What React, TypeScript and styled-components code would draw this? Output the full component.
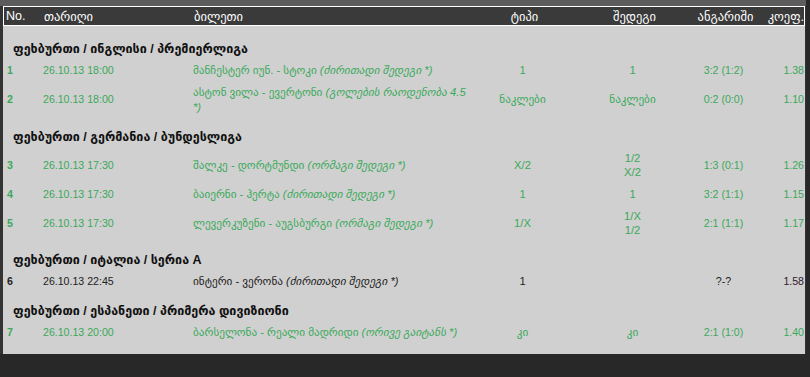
import styled, { createGlobalStyle } from 'styled-components'

const GlobalStyle = createGlobalStyle`
  body {
    margin: 0;
    background: #282828;
    font-family: 'Liberation Sans', Arial, 'DejaVu Sans', sans-serif;
  }
`

const SPage = styled.div`
  width: 803px;
  border-top: 6px solid #5c5c5c;
  padding-left: 3px;
  background: #333;
`

const STable = styled.div`
  width: 802px;
`

const SHead = styled.div`
  display: grid;
  grid-template-columns: 37px 150px 282px 100px 120px 62px 1fr;
  align-items: center;
  height: 18px;
  background: #3a3a3a;
  border: 1px solid #fff;
  color: #fff;
  font-size: 12.5px;
`

const SHeadCell = styled.div<{ $align?: string }>`
  text-align: ${(p) => p.$align || 'left'};
  padding: 0 0 0 3px;
  white-space: nowrap;
`

const SNo = styled.span`
  font-size: 12.5px;
  margin-left: -1px;
`

const SBody = styled.div`
  background: #d0d0d0;
  padding: 4px 0 11px;
`

const SGroupTitle = styled.div`
  padding: 11px 0 2px 10px;
  line-height: 16px;
  font-size: 12.5px;
  font-weight: bold;
  color: #111;
`

const SRow = styled.div<{ $dark?: boolean }>`
  display: grid;
  grid-template-columns: 37px 150px 282px 100px 120px 62px 1fr;
  align-items: center;
  padding: 3.5px 0;
  line-height: 15px;
  font-size: 10.6px;
  color: ${(p) => (p.$dark ? '#222' : '#3aa95a')};
`

const SCell = styled.div<{ $align?: string }>`
  text-align: ${(p) => p.$align || 'left'};
  padding: 0 2px 0 3px;
`

const STicket = styled(SCell)`
  font-size: 11.2px;
  padding-right: 0;
`

const SNum = styled(SCell)`
  font-weight: bold;
  padding-left: 4px;
`

const SResultLine = styled.div`
  line-height: 14.5px;
`

const SWord = styled.span`
  font-size: 11.2px;
`

const SNote = styled.i``

const SCoef = styled(SCell)<{ $dark?: boolean }>`
  text-align: right;
  padding-right: 1px;
  color: ${(p) => (p.$dark ? '#301830' : 'inherit')};
`

interface IBet {
  num: number
  date: string
  match: string
  note: string
  type: string
  result: string[]
  score: string
  coef: string
  dark?: boolean
}

interface IGroup {
  title: string
  bets: IBet[]
}

const groups: IGroup[] = [
  {
    title: 'ფეხბურთი / ინგლისი / პრემიერლიგა',
    bets: [
      { num: 1, date: '26.10.13 18:00', match: 'მანჩესტერ იუნ. - სტოკი', note: '(ძირითადი შედეგი *)', type: '1', result: ['1'], score: '3:2 (1:2)', coef: '1.38' },
      { num: 2, date: '26.10.13 18:00', match: 'ასტონ ვილა - ევერტონი', note: '(გოლების რაოდენობა 4.5 *)', type: 'ნაკლები', result: ['ნაკლები'], score: '0:2 (0:0)', coef: '1.10' },
    ],
  },
  {
    title: 'ფეხბურთი / გერმანია / ბუნდესლიგა',
    bets: [
      { num: 3, date: '26.10.13 17:30', match: 'შალკე - დორტმუნდი', note: '(ორმაგი შედეგი *)', type: 'X/2', result: ['1/2', 'X/2'], score: '1:3 (0:1)', coef: '1.26' },
      { num: 4, date: '26.10.13 17:30', match: 'ბაიერნი - ჰერტა', note: '(ძირითადი შედეგი *)', type: '1', result: ['1'], score: '3:2 (1:1)', coef: '1.15' },
      { num: 5, date: '26.10.13 17:30', match: 'ლევერკუზენი - აუგსბურგი', note: '(ორმაგი შედეგი *)', type: '1/X', result: ['1/X', '1/2'], score: '2:1 (1:1)', coef: '1.17' },
    ],
  },
  {
    title: 'ფეხბურთი / იტალია / სერია A',
    bets: [
      { num: 6, date: '26.10.13 22:45', match: 'ინტერი - ვერონა', note: '(ძირითადი შედეგი *)', type: '1', result: [], score: '?-?', coef: '1.58', dark: true },
    ],
  },
  {
    title: 'ფეხბურთი / ესპანეთი / პრიმერა დივიზიონი',
    bets: [
      { num: 7, date: '26.10.13 20:00', match: 'ბარსელონა - რეალი მადრიდი', note: '(ორივე გაიტანს *)', type: 'კი', result: ['კი'], score: '2:1 (1:0)', coef: '1.40' },
    ],
  },
]

const App = () => {
  return (
    <SPage>
      <GlobalStyle />
      <STable>
        <SHead>
          <SHeadCell><SNo>No.</SNo></SHeadCell>
          <SHeadCell>თარიღი</SHeadCell>
          <SHeadCell>ბილეთი</SHeadCell>
          <SHeadCell $align="center">ტიპი</SHeadCell>
          <SHeadCell $align="center">შედეგი</SHeadCell>
          <SHeadCell $align="center">ანგარიში</SHeadCell>
          <SHeadCell $align="right">კოეფ.</SHeadCell>
        </SHead>
        <SBody>
          {groups.map((g) => (
            <div key={g.title}>
              <SGroupTitle>{g.title}</SGroupTitle>
              {g.bets.map((b) => (
                <SRow key={b.num} $dark={b.dark}>
                  <SNum>{b.num}</SNum>
                  <SCell>{b.date}</SCell>
                  <STicket>
                    {b.match} <SNote>{b.note}</SNote>
                  </STicket>
                  <SCell $align="center"><SWord>{b.type}</SWord></SCell>
                  <SCell $align="center">
                    {b.result.map((r, i) => (
                      <SResultLine key={i}><SWord>{r}</SWord></SResultLine>
                    ))}
                  </SCell>
                  <SCell $align="center">{b.score}</SCell>
                  <SCoef $dark={b.dark}>{b.coef}</SCoef>
                </SRow>
              ))}
            </div>
          ))}
        </SBody>
      </STable>
    </SPage>
  )
}

export default App
